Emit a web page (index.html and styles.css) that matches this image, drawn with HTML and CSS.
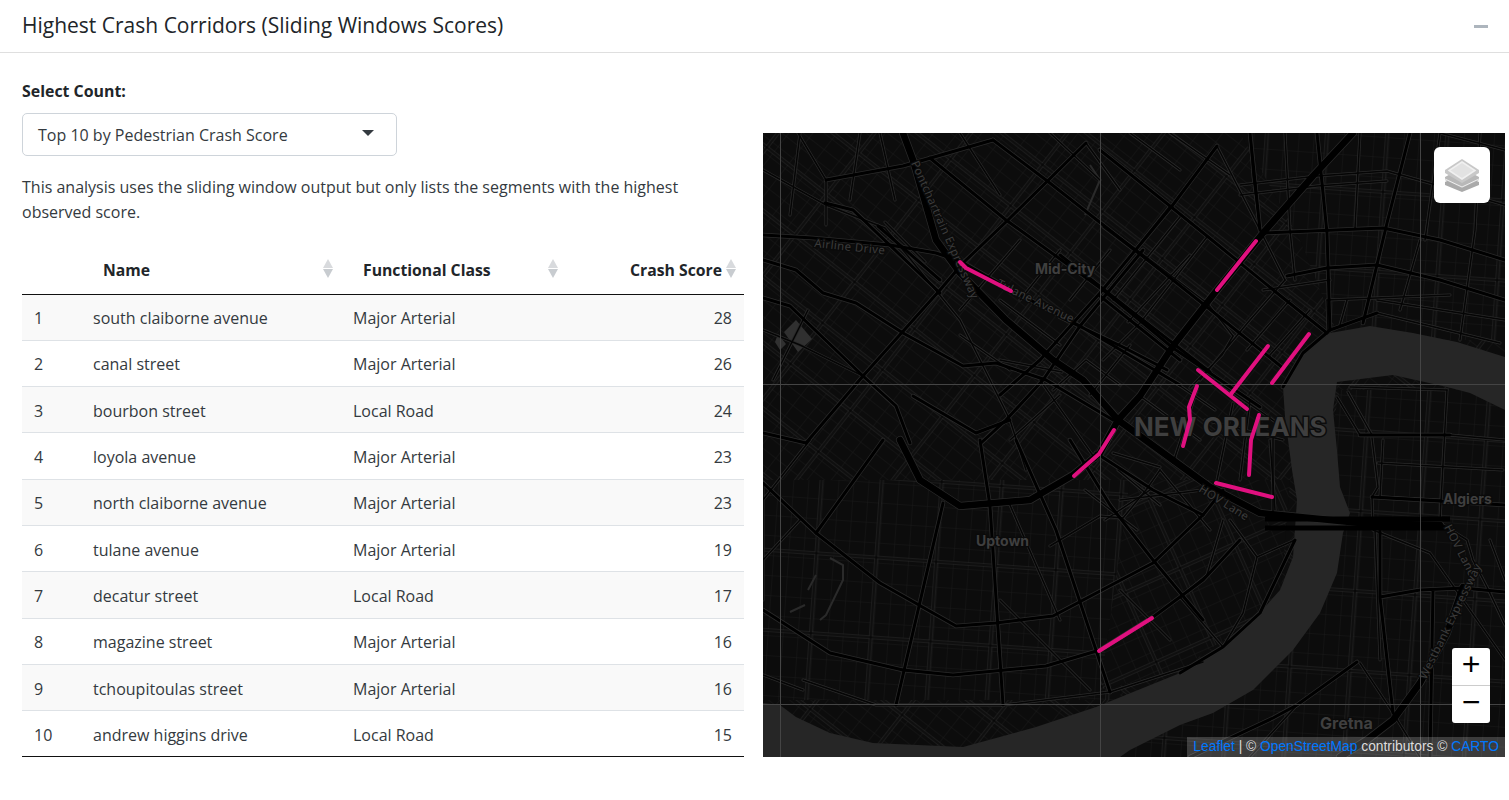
FILE: index.html
```html
<!DOCTYPE html>
<html lang="en">
<head>
<meta charset="utf-8">
<title>Highest Crash Corridors</title>
<link rel="stylesheet" href="styles.css">
</head>
<body>
<section class="card">
  <header class="card-header">
    <h3 class="card-title">Highest Crash Corridors (Sliding Windows Scores)</h3>
    <span class="collapse-icon"></span>
  </header>
  <div class="card-body">
    <div class="left-col">
      <label class="field-label">Select Count:</label>
      <div class="select-box"><span>Top 10 by Pedestrian Crash Score</span><i class="caret"></i></div>
      <p class="note">This analysis uses the sliding window output but only lists the segments with the highest observed score.</p>
      <table class="data-table">
        <colgroup><col class="c-idx"><col class="c-name"><col class="c-class"><col class="c-score"></colgroup>
        <thead>
          <tr>
            <th></th>
            <th class="sortable">Name<span class="sort"></span></th>
            <th class="sortable">Functional Class<span class="sort"></span></th>
            <th class="sortable num">Crash Score<span class="sort"></span></th>
          </tr>
        </thead>
        <tbody>
          <tr><td>1</td><td>south claiborne avenue</td><td>Major Arterial</td><td class="num">28</td></tr>
          <tr><td>2</td><td>canal street</td><td>Major Arterial</td><td class="num">26</td></tr>
          <tr><td>3</td><td>bourbon street</td><td>Local Road</td><td class="num">24</td></tr>
          <tr><td>4</td><td>loyola avenue</td><td>Major Arterial</td><td class="num">23</td></tr>
          <tr><td>5</td><td>north claiborne avenue</td><td>Major Arterial</td><td class="num">23</td></tr>
          <tr><td>6</td><td>tulane avenue</td><td>Major Arterial</td><td class="num">19</td></tr>
          <tr><td>7</td><td>decatur street</td><td>Local Road</td><td class="num">17</td></tr>
          <tr><td>8</td><td>magazine street</td><td>Major Arterial</td><td class="num">16</td></tr>
          <tr><td>9</td><td>tchoupitoulas street</td><td>Major Arterial</td><td class="num">16</td></tr>
          <tr><td>10</td><td>andrew higgins drive</td><td>Local Road</td><td class="num">15</td></tr>
        </tbody>
      </table>
    </div>
    <div class="map">
      <svg class="map-svg" viewBox="763 133 742 624" width="742" height="624" aria-hidden="true">
        <defs>
          <pattern id="gridA" width="19" height="13" patternUnits="userSpaceOnUse" patternTransform="rotate(38)"><path class="fine" d="M0 0H19M0 0V13"/></pattern>
          <pattern id="gridB" width="15" height="20" patternUnits="userSpaceOnUse" patternTransform="rotate(4)"><path class="fine" d="M0 0H15M0 0V20"/></pattern>
          <pattern id="gridC" width="15" height="19" patternUnits="userSpaceOnUse" patternTransform="rotate(-24)"><path class="fine" d="M0 0H15M0 0V19"/></pattern>
          <pattern id="blockA" width="76" height="52" patternUnits="userSpaceOnUse" patternTransform="rotate(38) translate(9 6)"><path class="block-case" d="M0 2H76M2 0V52"/><path class="block-core" d="M0 2H76M2 0V52"/></pattern>
          <pattern id="blockB" width="60" height="80" patternUnits="userSpaceOnUse" patternTransform="rotate(4) translate(11 13)"><path class="block-case" d="M0 2H60M2 0V80"/><path class="block-core" d="M0 2H60M2 0V80"/></pattern>
          <pattern id="blockC" width="60" height="76" patternUnits="userSpaceOnUse" patternTransform="rotate(-24) translate(5 9)"><path class="block-case" d="M0 2H60M2 0V76"/><path class="block-core" d="M0 2H60M2 0V76"/></pattern>
          <g id="minor">
            <path d="M826 180L798 133M826 180V225M826 205L885 228L960 320L1010 420L1026 470"/>
            <path d="M885 222L925 262M1000 360L1062 372"/>
            <path d="M763 330L800 345L863 376M773 380L808 310"/>
            <path d="M1086 143L1120 190M1100 223L1137 250L1207 303L1223 323L1233 336"/>
            <path d="M1217 146L1260 230L1285 280M1250 133L1253 176L1260 230"/>
            <path d="M1170 206L1103 290M1180 217L1113 300M1190 255L1128 322M1207 237L1140 323L1103 360"/>
            <path d="M1240 185L1317 176L1387 171L1440 186L1505 205M1240 195L1317 186L1387 181"/>
            <path d="M1173 280L1103 227M1207 307L1140 253M1140 396L1200 440M1160 372L1215 410"/>
            <path d="M1233 336L1222 355L1190 388M1285 280L1250 320L1200 380"/>
            <path d="M1197 390L1173 463M1233 403L1217 480M1273 437L1273 513M1205 420L1283 440M1215 380L1280 425M1250 400L1240 480"/>
            <path d="M1118 470L1160 505M1085 490L1137 530M1113 453L1160 467M1180 463L1207 483M1105 520L1150 490"/>
            <path d="M1180 597L1207 575L1223 520M1180 597L1223 647M1257 557L1243 613L1223 647M1230 520L1257 557L1295 540"/>
            <path d="M1350 387L1447 390M1337 397L1360 435M1348 392L1372 435M1372 438L1378 487L1372 497L1373 527M1378 463L1503 470"/>
            <path d="M1383 440L1380 497L1440 500M1447 390L1440 520M1450 435L1505 440"/>
            <path d="M1375 530L1380 660M1373 530L1430 553L1505 660"/>
            <path d="M1443 525L1467 540L1473 560L1487 587L1505 625M1490 540L1505 580"/>
            <path d="M1360 663L1393 713L1420 757M1250 757L1297 705"/>
            <path d="M1327 300L1328 330M1347 300L1340 325M1377 313L1500 343M1377 300L1505 320"/>
            <path d="M1480 133L1475 230L1460 340M1440 133L1425 240M1285 133L1290 230M1360 133L1355 228M1505 150L1440 133"/>
            <path d="M1263 290L1330 280M1327 300L1450 295M1290 230L1295 280M1420 240L1400 310"/>
            <path d="M1050 546L1100 516L1123 518L1146 490L1160 470"/>
            <path d="M803 680L876 705L1003 705L1110 692L1203 662M763 675L803 690"/>
            <path d="M810 440L763 500M763 483V600M763 560L800 520"/>
            <path d="M1040 380L1096 460M1120 500L1203 490"/>
            <path d="M1090 690L1000 600M1120 590L1170 640M1010 505L1060 620M1160 470L1210 530"/>
            <path d="M860 133L850 200M800 133L790 215M763 170L826 205M880 133L895 200"/>
            <path d="M960 133L1000 195M1050 133L1100 180M1130 133L1180 170M1170 133L1230 175"/>
            <path d="M1020 240L960 310M1060 250L1020 300M1110 250L1070 300M1000 300L1060 345M960 335L1010 370"/>
            <path d="M1053 390L1086 360L1120 385M1010 440L1060 395M1130 345L1090 395"/>
            <path d="M1270 440L1275 510M1290 300L1247 350M1310 310L1270 355"/>
          </g>
          <g id="mid">
            <path d="M826 180L903 166L993 140"/>
            <path d="M825 203L853 210L940 293M878 226L940 280"/>
            <path d="M930 158L1006 220L1103 290L1143 323L1173 348L1260 407"/>
            <path d="M993 140L1046 180L1130 246L1207 307L1283 368"/>
            <path d="M1086 143L1008 220L963 263L940 290L863 376L806 443"/>
            <path d="M1143 250L1080 326L1043 380L1006 420L981 443"/>
            <path d="M1172 206L1100 293L1040 360L1000 395M1217 146L1172 206"/>
            <path d="M1100 150L1170 206L1207 236L1277 293L1327 333"/>
            <path d="M1060 317L1123 347L1167 370M960 261L1011 290L1080 326L1180 385"/>
            <path d="M1060 255L1130 310L1210 372M1100 296L1180 360"/>
            <path d="M763 235L813 238L890 245L936 253L960 261"/>
            <path d="M763 298L790 306L863 376L896 406L910 443M763 260L796 270L823 293L856 303L903 333L963 366L996 363L1046 380L1113 420"/>
            <path d="M913 396L976 433L1010 420"/>
            <path d="M980 440L990 506L1003 705M1016 440L1056 530L1110 692M1070 440L1110 505L1153 560L1203 620"/>
            <path d="M943 503L896 705M763 483L816 533L880 583L956 626L996 623L1053 616L1153 563L1203 515L1223 490"/>
            <path d="M763 610L830 653L903 670L953 675L1046 666L1100 650L1153 617L1203 580L1240 540"/>
            <path d="M1096 453L1153 490L1203 515M816 533L883 440M763 433L806 443"/>
            <path d="M1263 233L1383 228L1440 240L1505 260M1287 276L1327 268L1377 265L1440 280L1505 300"/>
            <path d="M1317 133L1327 233L1330 330M1410 133L1387 223L1363 323M1250 133L1260 230"/>
            <path d="M1380 530L1380 597L1393 713M1433 590L1430 757M1380 597L1420 590L1463 588L1505 592"/>
            <path d="M1360 435L1450 435M1372 497L1505 505M1357 662L1297 705L1273 718L1190 757"/>
            <path d="M1283 387L1303 353L1330 330L1377 313M1180 673L1223 647L1260 613L1295 540"/>
          </g>
          <g id="major">
            <path d="M903 133L913 160L936 240L960 273L1006 320L1053 360L1083 380L1118 420L1177 463L1210 487L1260 513L1360 523"/>
            <path d="M1353 133L1313 176L1263 233L1217 290L1173 346L1140 396L1118 420"/>
            <path d="M900 440L920 480L960 506L1030 500L1073 475L1100 453L1118 420"/>
            <path d="M1463 587L1447 633L1420 683L1393 720L1367 740L1340 757"/>
            <path d="M1440 525L1360 523"/>
          </g>
        </defs>
        <rect class="land" x="763" y="133" width="742" height="624"/>
        <rect x="763" y="133" width="742" height="624" fill="url(#gridA)"/>
        <rect x="763" y="133" width="742" height="624" fill="url(#blockA)"/>
        <path class="land" d="M763 480H1130L1120 700H763Z"/>
        <path fill="url(#gridB)" d="M763 480H1130L1120 700H763Z"/>
        <path fill="url(#blockB)" d="M763 480H1130L1120 700H763Z"/>
        <path class="land" d="M1240 133H1505V340H1340L1300 240Z"/>
        <path fill="url(#gridB)" d="M1240 133H1505V340H1340L1300 240Z"/>
        <path fill="url(#blockB)" d="M1240 133H1505V340H1340L1300 240Z"/>
        <path class="land" d="M1340 390H1505V757H1120L1293 620Z"/>
        <path fill="url(#gridB)" d="M1340 390H1505V757H1120L1293 620Z"/>
        <path fill="url(#blockB)" d="M1340 390H1505V757H1120L1293 620Z"/>
        <path class="land" d="M1130 480H1290L1280 600L1180 670L1100 690Z"/>
        <path fill="url(#gridC)" d="M1130 480H1290L1280 600L1180 670L1100 690Z"/>
        <path fill="url(#blockC)" d="M1130 480H1290L1280 600L1180 670L1100 690Z"/>
        <path class="water" d="M763 703L780 705L796 717L830 733L873 743L963 747L1036 727L1096 707L1180 673L1213 653L1247 627L1280 590L1293 557L1297 500L1292 470L1285 417L1283 387L1303 353L1330 333L1370 326L1413 333L1457 342L1505 357V410L1470 393L1447 387L1393 375L1337 382L1333 410L1337 450L1340 487L1350 513L1343 533L1337 573L1320 613L1293 650L1253 690L1213 713L1180 725L1130 750L1120 757H763Z"/>
        <path class="park" d="M784 332L796 320L812 339L798 352ZM778 334L786 344L780 350L775 342Z"/>
        <path class="park-line" d="M830 558L843 565L843 580L826 615L820 620M816 575L808 590M790 612L805 605M1090 165L1100 180L1085 215"/>
        <use href="#minor" class="casing-minor"/>
        <use href="#mid" class="casing-mid"/>
        <use href="#major" class="casing-major"/>
        <use href="#minor" class="road-minor"/>
        <use href="#mid" class="road-mid"/>
        <use href="#major" class="road-major"/>
        <path class="bridge" d="M1265 519H1450M1265 528H1450"/>
        <text class="road-label" x="814" y="247" transform="rotate(6 814 247)">Airline Drive</text>
        <text class="road-label" x="911" y="163" transform="rotate(66 911 163)">Pontchartrain Expressway</text>
        <text class="road-label" x="996" y="286" transform="rotate(26 996 286)">Tulane Avenue</text>
        <text class="road-label" x="1198" y="491" transform="rotate(32 1198 491)">HOV Lane</text>
        <text class="road-label" x="1444" y="527" transform="rotate(63 1444 527)">HOV Lane</text>
        <text class="road-label" x="1426" y="680" transform="rotate(-64 1426 680)">Westbank Expressway</text>
        <text class="place" x="1035" y="274">Mid-City</text>
        <text class="place" x="976" y="546">Uptown</text>
        <text class="place" x="1443" y="504">Algiers</text>
        <text class="place place-lg" x="1320" y="729">Gretna</text>
        <text class="city" x="1134" y="436">NEW ORLEANS</text>
        <path class="seam" d="M780.5 133V757M1100.5 133V757M1420.5 133V757M763 384.5H1505M763 704.5H1505"/>
        <path class="seg" d="M960 262L966 268L1011 291"/>
        <path class="seg" d="M1256 241L1217 290"/>
        <path class="seg" d="M1268 346L1231 394"/>
        <path class="seg" d="M1309 334L1272 383"/>
        <path class="seg" d="M1198 370L1247 409"/>
        <path class="seg" d="M1197 386L1189 407L1190 420L1183 446"/>
        <path class="seg" d="M1259 415L1251 440L1249 475"/>
        <path class="seg" d="M1216 483L1272 497"/>
        <path class="seg" d="M1114 430L1099 454L1083 468L1074 476"/>
        <path class="seg" d="M1152 618L1099 651"/>
      </svg>
      <button class="layers-btn" type="button" aria-label="Layers">
        <svg viewBox="0 0 34 34" width="34" height="34">
          <path class="ly-c" d="M17 16L34 24V27L17 34L0 27V24Z"/>
          <path class="ly-b" d="M17 10L34 19V22L17 30L0 22V19Z"/>
          <path class="ly-line" d="M0 21L17 29L34 21"/>
          <path class="ly-a" d="M17 1L34 12V15L17 25L0 15V12Z"/>
          <path class="ly-t" d="M17 4L30 12.500L17 21L4 12.500Z"/>
        </svg>
      </button>
      <div class="zoom-ctl">
        <a class="zoom-btn">+</a>
        <a class="zoom-btn">&#8722;</a>
      </div>
      <div class="attribution"><a>Leaflet</a> | &copy; <a>OpenStreetMap</a> contributors &copy; <a>CARTO</a></div>
    </div>
  </div>
</section>
</body>
</html>
```

FILE: styles.css
```css
* { box-sizing: border-box; }
html, body { margin: 0; padding: 0; background: #fff; }
body {
  font-family: "Open Sans", "Noto Sans", sans-serif;
  font-size: 16px;
  color: #212529;
  height: 800px;
  overflow: hidden;
}
.card-header {
  height: 53px;
  border-bottom: 1px solid #dfdfdf;
  padding: 0 21px 0 22px;
  display: flex;
  align-items: center;
  justify-content: space-between;
}
.card-title { margin: 0 0 2px; font-size: 21px; font-weight: 400; color: #212529; }
.collapse-icon { width: 14px; height: 3px; background: #adb5bd; }
.card-body { display: flex; padding: 0 4px 0 22px; }
.left-col { width: 722px; margin-right: 19px; padding-top: 26px; }
.field-label { display: block; font-weight: 700; font-size: 15.900px; line-height: 24px; margin-bottom: 10px; }
.select-box {
  width: 375px;
  height: 43px;
  border: 1px solid #ced4da;
  border-radius: 5px;
  display: flex;
  align-items: center;
  justify-content: space-between;
  padding: 0 22px 0 15px;
  color: #343a40;
}
.caret { width: 0; height: 0; border-style: solid; border-width: 6px 6px 0; border-color: #343a40 transparent transparent; margin-bottom: 3px; }
.note { margin: 19px 0 0; line-height: 25px; width: 690px; color: #343a40; }
.data-table { width: 722px; margin-top: 21px; border-collapse: collapse; table-layout: fixed; }
.c-idx { width: 59px; }
.c-name { width: 260px; }
.c-class { width: 225px; }
.c-score { width: 178px; }
.data-table th {
  position: relative;
  height: 48px;
  text-align: left;
  padding: 0 12px 0 22px;
  font-weight: 700;
  font-size: 15.750px;
  border-bottom: 1px solid #111;
}
.data-table th.num { text-align: right; padding-right: 22px; }
.data-table td { height: 46.300px; padding: 2px 12px 0; border-bottom: 1px solid #dee2e6; color: #343a40; }
.data-table td.num { text-align: right; }
.data-table tbody tr:nth-child(odd) td { background: #f9f9f9; }
.data-table tbody tr:last-child td { border-bottom: 1px solid #111; }
.sort { position: absolute; right: 8px; top: 13px; width: 10px; height: 19px; }
.sort::before, .sort::after {
  content: "";
  position: absolute;
  left: 0;
  width: 0;
  height: 0;
  border-style: solid;
}
.sort::before { top: 0; border-width: 0 5px 9px; border-color: transparent transparent #d8dadd; }
.sort::after { bottom: 0; border-width: 9px 5px 0; border-color: #c8ccd0 transparent transparent; }
.map { position: relative; width: 742px; height: 624px; margin-top: 80px; background: #0e0e0e; overflow: hidden; }
.map-svg { display: block; }
.land { fill: #0c0c0c; }
.fine { fill: none; stroke: #1a1a1a; stroke-width: 1; }
.block-case { fill: none; stroke: #2a2a2a; stroke-width: 3; }
.block-core { fill: none; stroke: #050505; stroke-width: 1.500; }
.water { fill: #262626; }
.park { fill: #303030; }
.park-line { fill: none; stroke: #2a2a2a; stroke-width: 2; }
.casing-minor, .casing-mid, .casing-major, .road-minor, .road-mid, .road-major { fill: none; stroke-linecap: round; stroke-linejoin: round; }
.casing-minor { stroke: #2a2a2a; stroke-width: 3; }
.casing-mid { stroke: #2a2a2a; stroke-width: 4.500; }
.casing-major { stroke: #2a2a2a; stroke-width: 8; }
.road-minor { stroke: #050505; stroke-width: 1.500; }
.road-mid { stroke: #000; stroke-width: 3; }
.road-major { stroke: #000; stroke-width: 6.500; }
.bridge { fill: none; stroke: #000; stroke-width: 5; }
.road-label { font-family: "Noto Sans", sans-serif; font-size: 11.500px; fill: #3c3c3c; letter-spacing: .4px; paint-order: stroke; stroke: #0a0a0a; stroke-width: 2.500px; }
.place { font-family: "Inter", sans-serif; font-size: 14px; font-weight: 700; fill: #3f3f3f; paint-order: stroke; stroke: #0a0a0a; stroke-width: 2.500px; }
.place-lg { font-size: 16px; }
.city { font-family: "Inter", sans-serif; font-size: 26px; font-weight: 700; fill: #3f3f3f; paint-order: stroke; stroke: #0c0c0c; stroke-width: 3px; }
.seam { fill: none; stroke: #444; stroke-width: 1; }
.seg { fill: none; stroke: #e0107f; stroke-width: 4; stroke-linecap: round; stroke-linejoin: round; }
.layers-btn {
  position: absolute;
  top: 14px;
  right: 15px;
  width: 56px;
  height: 56px;
  padding: 0;
  border: 0;
  background: #fff;
  border-radius: 6px;
  display: flex;
  align-items: center;
  justify-content: center;
}
.ly-a { fill: #c8c8c8; }
.ly-b { fill: #b8b8b8; }
.ly-c { fill: #aaa; }
.ly-t { fill: #e2e2e2; stroke: #f0f0f0; stroke-width: 1.500; }
.ly-line { fill: none; stroke: #eee; stroke-width: 1; }
.zoom-ctl {
  position: absolute;
  top: 515px;
  right: 15px;
  width: 38px;
  background: #fff;
  border-radius: 3px;
  overflow: hidden;
}
.zoom-btn {
  display: block;
  height: 37.500px;
  line-height: 38px;
  text-align: center;
  font-family: "Liberation Mono", monospace;
  font-size: 32px;
  font-weight: 400;
  color: #000;
}
.zoom-btn:first-child { border-bottom: 1px solid #ccc; }
.attribution {
  position: absolute;
  right: 0;
  bottom: 0;
  height: 20px;
  padding: 0 6px;
  background: rgba(255, 255, 255, .2);
  font-family: "Liberation Sans", Arial, sans-serif;
  font-size: 13.800px;
  line-height: 19px;
  color: #ddd;
  white-space: nowrap;
}
.attribution a { color: #0078ff; }
```
